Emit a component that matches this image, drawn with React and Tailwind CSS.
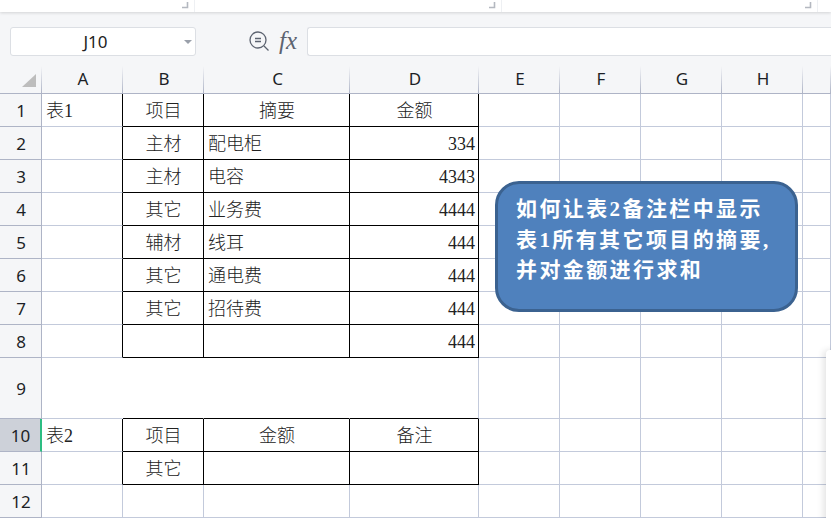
const serif = "font-['Liberation_Serif','Noto_Sans_CJK_SC',serif]"

const headers = [
  { label: 'A', w: 'w-[81px]' },
  { label: 'B', w: 'w-[81px]' },
  { label: 'C', w: 'w-[146px]' },
  { label: 'D', w: 'w-[129px]' },
  { label: 'E', w: 'w-[81px]' },
  { label: 'F', w: 'w-[81px]' },
  { label: 'G', w: 'w-[81px]' },
  { label: 'H', w: 'w-[81px]' },
  { label: '', w: 'w-[28px]' },
]

const rows = [
  { n: 1, h: 'h-[33px]', a: '表1', b: '项目', c: '摘要', d: '金额', center: true },
  { n: 2, h: 'h-[33px]', b: '主材', c: '配电柜', d: '334' },
  { n: 3, h: 'h-[33px]', b: '主材', c: '电容', d: '4343' },
  { n: 4, h: 'h-[33px]', b: '其它', c: '业务费', d: '4444' },
  { n: 5, h: 'h-[33px]', b: '辅材', c: '线耳', d: '444' },
  { n: 6, h: 'h-[33px]', b: '其它', c: '通电费', d: '444' },
  { n: 7, h: 'h-[33px]', b: '其它', c: '招待费', d: '444' },
  { n: 8, h: 'h-[33px]', d: '444' },
  { n: 9, h: 'h-[61px]', merged: true },
  { n: 10, h: 'h-[33px]', a: '表2', b: '项目', c: '金额', d: '备注', center: true },
  { n: 11, h: 'h-[33px]', b: '其它' },
  { n: 12, h: 'h-[33px]', open: true },
]

function Launcher() {
  return (
    <svg width="8" height="8" viewBox="0 0 8 8" className="mb-[3px]">
      <path d="M6.5 1v5.5H1" fill="none" stroke="#b4b8c0" strokeWidth="1.6" />
    </svg>
  )
}

function Ribbon() {
  return (
    <div className="h-[12px] bg-white flex shadow-[0_1px_3px_rgba(0,0,0,0.14)] relative">
      <div className="w-[195px] flex justify-end items-end pr-[5px] border-r border-[#eef0f3]"><Launcher /></div>
      <div className="w-[307px] flex justify-end items-end pr-[5px] border-r border-[#eef0f3]"><Launcher /></div>
      <div className="w-[316px] flex justify-end items-end pr-[5px] border-r border-[#eef0f3]"><Launcher /></div>
    </div>
  )
}

function FormulaBar() {
  return (
    <div className="h-[54px] pt-[15px] pl-[10px] flex items-start bg-[#f5f6f8]">
      <div className="w-[186px] h-[29px] bg-white border border-[#dcdfe4] rounded-[3px] flex items-center relative">
        <span className="flex-1 text-center text-[17px] text-[#222] pr-[4px] font-['Noto_Sans',sans-serif]">J10</span>
        <svg width="8" height="4" viewBox="0 0 8 4" className="mr-[3px]"><path d="M0 0h8L4 4z" fill="#9aa0aa" /></svg>
      </div>
      <svg width="22" height="22" viewBox="0 0 22 22" className="ml-[51px] mt-[3px]" fill="none" stroke="#5c6370" strokeWidth="1.3">
        <circle cx="11" cy="10" r="8" />
        <path d="M8 8.5h6M8 11.5h6M17 16l4.5 4.5" />
      </svg>
      <span className="ml-[10px] mt-[1px] w-[22px] text-[25px] leading-[26px] italic text-[#5c6370] font-['Liberation_Serif',serif]">fx</span>
      <div className="ml-[6px] flex-1 h-[29px] bg-white border-y border-l border-[#dcdfe4] rounded-l-[3px]" />
    </div>
  )
}

function ColumnHeaders() {
  return (
    <div className="h-[28px] flex bg-[#f5f6f8] border-b border-[#aeb4c6]">
      <div className="w-[42px] flex justify-between">
        <svg width="14" height="13" viewBox="0 0 14 13" className="ml-[22px] mt-[8px]"><path d="M14 0v13H0z" fill="#bdbdbd" /></svg>
        <div className="w-px bg-linear-to-b from-[#f5f6f8] to-[#aeb4c6]" />
      </div>
      {headers.map(col => (
        <div key={col.w + col.label} className={`${col.w} flex shrink-0`}>
          <span className="flex-1 pl-[2px] text-center text-[17px] leading-[26px] text-[#1c1f26] font-['Noto_Sans',sans-serif]">{col.label}</span>
          <div className="w-px bg-linear-to-b from-[#f5f6f8] to-[#aeb4c6]" />
        </div>
      ))}
    </div>
  )
}

function Cell({ w, right, hideRight, bottom, align = 'center', children }) {
  const alignClass = align === 'left' ? 'justify-start pl-[4px]' : align === 'right' ? 'justify-end pr-[3px]' : 'justify-center pl-[1px]'
  const rightClass = right ? 'border-r-black' : hideRight ? 'border-r-transparent' : 'border-r-[#c3cadb]'
  return (
    <div className={`${w} shrink-0 flex items-center pt-[3px] border-r border-b ${rightClass} ${bottom ? 'border-b-black' : 'border-b-[#c3cadb]'} ${alignClass} text-[18px] font-light text-[#222] ${serif}`}>
      {children}
    </div>
  )
}

function Row({ row }) {
  const active = row.n === 10
  const boxed = !row.merged && !row.open
  return (
    <div className={`${row.h} flex`}>
      <div className={`w-[42px] shrink-0 flex items-center justify-center pt-[1px] pl-[1px] border-r border-b border-b-[#aeb4c6] ${active ? 'bg-[#cdd1d9] border-r-[#2dbd82] border-r-2' : 'bg-[#f5f6f8] border-r-[#aeb4c6]'} text-[17px] text-[#1c1f26] font-['Noto_Sans',sans-serif]`}>
        {row.n}
      </div>
      <Cell w="w-[81px]" right={boxed} hideRight={row.merged} align="left">{row.a}</Cell>
      <Cell w="w-[81px]" right={boxed} hideRight={row.merged} bottom={boxed || row.merged}>{row.b}</Cell>
      <Cell w="w-[146px]" right={boxed} hideRight={row.merged} bottom={boxed || row.merged} align={row.center ? 'center' : 'left'}>{row.c}</Cell>
      <Cell w="w-[129px]" right={boxed} bottom={boxed || row.merged} align={row.center ? 'center' : 'right'}>{row.d}</Cell>
      <Cell w="w-[81px]" />
      <Cell w="w-[81px]" />
      <Cell w="w-[81px]" />
      <Cell w="w-[81px]" />
      <Cell w="w-[28px]" />
    </div>
  )
}

export default function App() {
  return (
    <div className="w-[831px] h-[518px] overflow-hidden relative bg-white">
      <Ribbon />
      <FormulaBar />
      <ColumnHeaders />
      {rows.map(row => <Row key={row.n} row={row} />)}

      {/* text box over the sheet */}
      <div className="absolute left-[495px] top-[181px] w-[303px] h-[131px] rounded-[24px] bg-[#4f81bd] border-[3px] border-[#3b6290] pl-[18px] pt-[10px] text-[21px] leading-[30.5px] tracking-[2.4px] font-semibold text-white font-['Liberation_Serif','Noto_Sans_CJK_SC',serif]">
        <div>如何让表<b>2</b>备注栏中显示</div>
        <div className="whitespace-nowrap">表<b>1</b>所有其它项目的摘要,</div>
        <div>并对金额进行求和</div>
      </div>

      {/* side panel peeking in */}
      <div className="absolute left-[826px] top-[350px] w-[20px] h-[180px] rounded-tl-[4px] bg-white shadow-[-3px_0_6px_rgba(0,0,0,0.1)]" />
    </div>
  )
}
